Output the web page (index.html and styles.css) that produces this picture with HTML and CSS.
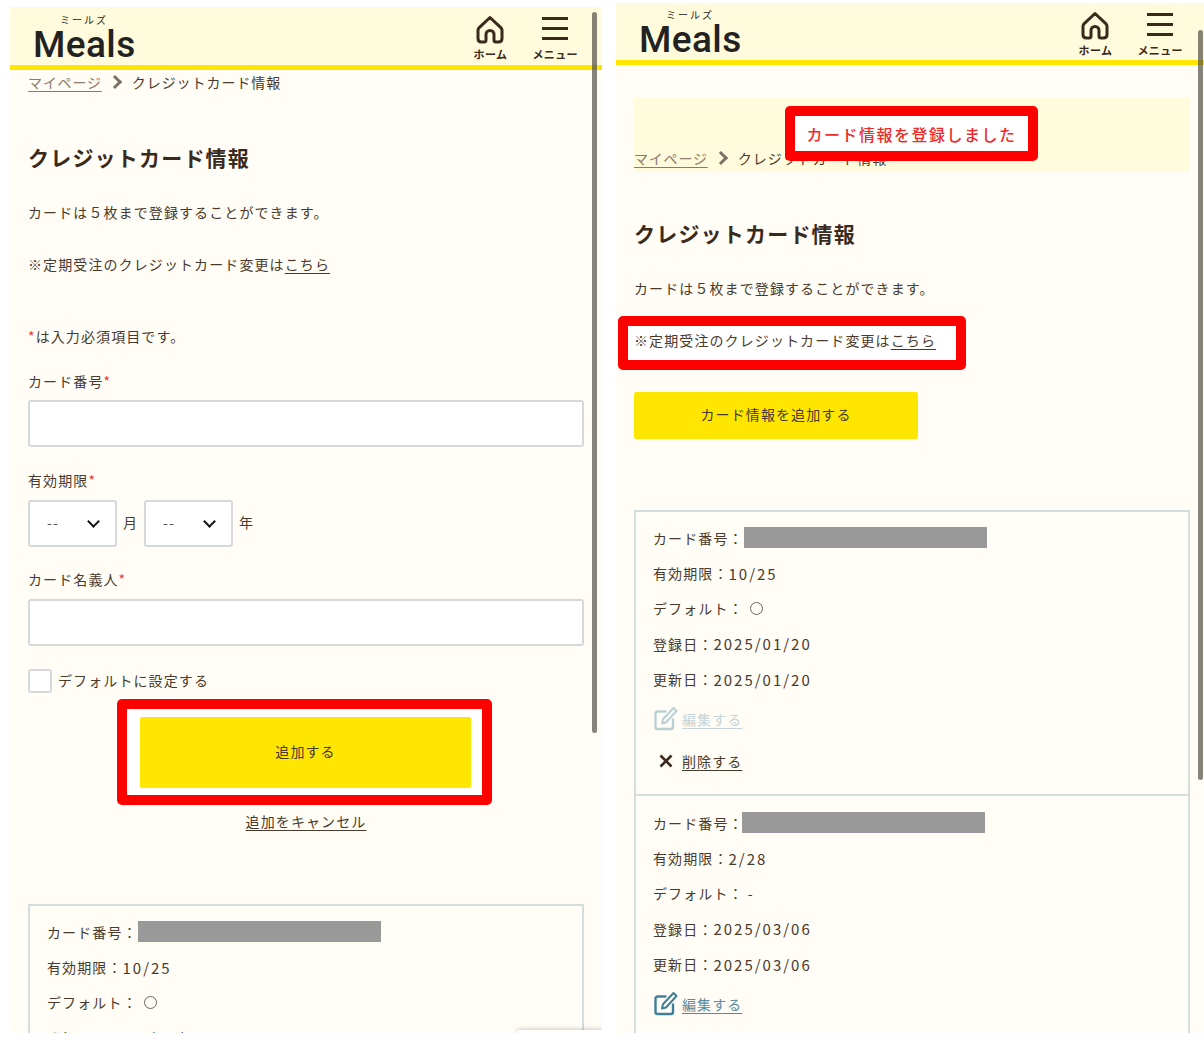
FILE: index.html
```html
<!DOCTYPE html>
<html lang="ja">
<head>
  <meta charset="UTF-8" />
  <title>クレジットカード情報 | Meals</title>
  <link rel="stylesheet" href="styles.css">
</head>
<body>
  <svg width="0" height="0" class="defs">
    <symbol id="i-home" viewBox="0 0 30 30">
      <path d="M15 2.500 4.200 12.600c-.8.8-1.200 1.600-1.200 2.700v8.200c0 2.200 1.300 3.500 3.500 3.500H9c1.300 0 2-.7 2-2v-5.500c0-2.200 1.700-4 4-4s4 1.800 4 4V25c0 1.300.7 2 2 2h2.500c2.200 0 3.500-1.300 3.500-3.500v-8.200c0-1.100-.4-1.900-1.200-2.700z" fill="none" stroke="currentColor" stroke-width="3" stroke-linejoin="round"/>
    </symbol>
    <symbol id="i-edit" viewBox="0 0 24 24">
      <path d="M12 4.500H4a2 2 0 0 0-2 2V20a2 2 0 0 0 2 2h13.500a2 2 0 0 0 2-2v-7.500" fill="none" stroke="currentColor" stroke-width="2.400" stroke-linecap="round"/>
      <path d="M20 1 23 4 12.500 15.500 8.500 16.500 9.500 12.200z" fill="none" stroke="currentColor" stroke-width="2" stroke-linejoin="round"/>
    </symbol>
    <symbol id="i-cross" viewBox="0 0 14 14">
      <path d="M1.500 1.500 12.500 12.500M12.500 1.500 1.500 12.500" fill="none" stroke="currentColor" stroke-width="2.600"/>
    </symbol>
  </svg>

  <!-- left phone: add card form -->
  <section class="phone phone-left">
    <header class="top">
      <div class="logo"><span class="logo-kana">ミールズ</span><span class="logo-name">Meals</span></div>
      <nav class="top-nav">
        <a class="top-link"><svg class="i-home"><use href="#i-home"/></svg><span>ホーム</span></a>
        <a class="top-link"><span class="burger"><i></i><i></i><i></i></span><span>メニュー</span></a>
      </nav>
    </header>
    <div class="crumbs"><a class="crumb-link">マイページ</a><span class="crumb-sep"></span><span>クレジットカード情報</span></div>
    <h1 class="title">クレジットカード情報</h1>
    <p class="line line-a">カードは５枚まで登録することができます。</p>
    <p class="line line-b">※定期受注のクレジットカード変更は<a class="link">こちら</a></p>

    <form class="card-form">
      <p class="line req-note"><em>*</em>は入力必須項目です。</p>
      <label class="field-label">カード番号<em>*</em></label>
      <div class="input"></div>
      <label class="field-label">有効期限<em>*</em></label>
      <div class="expiry">
        <div class="select">--<span class="chev"></span></div><span class="unit">月</span>
        <div class="select">--<span class="chev"></span></div><span class="unit">年</span>
      </div>
      <label class="field-label">カード名義人<em>*</em></label>
      <div class="input"></div>
      <div class="check-row"><span class="check"></span><span class="check-text">デフォルトに設定する</span></div>
      <div class="red-frame frame-submit"><button class="btn btn-add" type="button">追加する</button></div>
      <a class="link cancel">追加をキャンセル</a>
    </form>

    <div class="cards cards-left">
      <div class="card">
        <p class="card-row">カード番号：<span class="mask"></span></p>
        <p class="card-row">有効期限：<span class="num">10/25</span></p>
        <p class="card-row">デフォルト： <span class="circle"></span></p>
        <p class="card-row">登録日：<span class="num">2025/01/20</span></p>
      </div>
    </div>
    <div class="scrollbar scroll-left"></div>
    <div class="captcha"></div>
  </section>

  <!-- right phone: after registering -->
  <section class="phone phone-right">
    <header class="top">
      <div class="logo"><span class="logo-kana">ミールズ</span><span class="logo-name">Meals</span></div>
      <nav class="top-nav">
        <a class="top-link"><svg class="i-home"><use href="#i-home"/></svg><span>ホーム</span></a>
        <a class="top-link"><span class="burger"><i></i><i></i><i></i></span><span>メニュー</span></a>
      </nav>
    </header>
    <div class="flash">
      <div class="crumbs"><a class="crumb-link">マイページ</a><span class="crumb-sep"></span><span>クレジットカード情報</span></div>
      <div class="red-frame flash-msg">カード情報を登録しました</div>
    </div>
    <h1 class="title">クレジットカード情報</h1>
    <p class="line line-a">カードは５枚まで登録することができます。</p>
    <div class="red-frame frame-note"><p class="line">※定期受注のクレジットカード変更は<a class="link">こちら</a></p></div>
    <button class="btn btn-new" type="button">カード情報を追加する</button>

    <div class="cards cards-right">
      <div class="card">
        <p class="card-row">カード番号：<span class="mask"></span></p>
        <p class="card-row">有効期限：<span class="num">10/25</span></p>
        <p class="card-row">デフォルト： <span class="circle"></span></p>
        <p class="card-row">登録日：<span class="num">2025/01/20</span></p>
        <p class="card-row">更新日：<span class="num">2025/01/20</span></p>
        <a class="action action-edit is-off"><svg class="i-edit"><use href="#i-edit"/></svg><span>編集する</span></a>
        <a class="action action-del"><svg class="i-cross"><use href="#i-cross"/></svg><span>削除する</span></a>
      </div>
      <div class="card card-last">
        <p class="card-row">カード番号：<span class="mask mask-b"></span></p>
        <p class="card-row">有効期限：<span class="num">2/28</span></p>
        <p class="card-row">デフォルト： -</p>
        <p class="card-row">登録日：<span class="num">2025/03/06</span></p>
        <p class="card-row">更新日：<span class="num">2025/03/06</span></p>
        <a class="action action-edit"><svg class="i-edit"><use href="#i-edit"/></svg><span>編集する</span></a>
      </div>
    </div>
    <div class="scrollbar scroll-right"></div>
  </section>
</body>
</html>
```

FILE: styles.css
```css
/* ===== tokens ===== */
:root{
  --ink:#4a3a2d;
  --dark:#3a2a1d;
  --cream:#fffdf6;
  --butter:#fffbdc;
  --yellow:#ffe600;
  --red:#ff0000;
  --line:#d5dcdc;
}

/* ===== page ===== */
*{box-sizing:border-box;}
html,body{margin:0;height:100%;}
body{
  width:1204px;height:1044px;overflow:hidden;background:#fff;
  display:flex;align-items:flex-start;
  color:var(--ink);
  font-family:"Noto Sans CJK JP","Noto Sans",sans-serif;
  font-size:14px;letter-spacing:1.100px;
}
.defs{position:absolute;}
p{margin:0;}
.phone{position:relative;overflow:hidden;background:var(--cream);flex:none;}
.phone-left{width:592px;height:1026px;margin:7px 0 0 10px;padding:0 18px;}
.phone-right{width:588px;height:1030px;margin:3px 0 0 14px;padding:0 14px 0 18px;}

/* ===== header ===== */
.top{
  height:63px;margin:0 -18px;padding:0 24px 0 23px;
  background:var(--butter);border-bottom:5px solid var(--yellow);
  display:flex;justify-content:space-between;
}
.phone-right .top{margin-right:-14px;height:62px;padding-right:21px;}
.logo{display:flex;flex-direction:column;color:#222;}
.logo-kana{font-size:10px;line-height:12px;margin:7px 0 0 27px;letter-spacing:2px;}
.logo-name{
  font-family:Roboto,sans-serif;font-weight:500;
  font-size:37px;line-height:30px;letter-spacing:.4px;margin-top:4px;
}
.phone-right .logo-kana{margin-top:6px;}
.top-nav{display:flex;gap:25px;padding-top:6px;color:var(--dark);}
.top-link{
  display:flex;flex-direction:column;align-items:center;justify-content:flex-end;
  height:47px;font-size:11px;line-height:12px;font-weight:700;letter-spacing:.4px;
}
.i-home{width:30px;height:30px;margin-bottom:3px;}
.burger{display:flex;flex-direction:column;gap:7px;margin-bottom:8px;}
.burger i{display:block;width:26px;height:3px;background:var(--dark);}

/* ===== breadcrumbs ===== */
.crumbs{display:flex;align-items:center;height:26px;margin-top:-1px;letter-spacing:.95px;}
.crumb-link{color:#8d7a6c;text-decoration:underline;text-underline-offset:3px;letter-spacing:.8px;}
.crumb-sep{
  width:10px;height:10px;margin:0 12px 0 8px;
  border:solid #7d6f63;border-width:3px 3px 0 0;transform:rotate(45deg);
}

/* ===== text ===== */
.title{margin:47px 0 0;font-size:21px;line-height:30px;font-weight:700;color:var(--dark);letter-spacing:1.200px;}
.phone-right .title{margin-top:46px;}
.line{line-height:20px;}
.line-a{margin-top:30px;}
.line-b{margin-top:32px;}
.link{color:var(--ink);text-decoration:underline;text-underline-offset:3px;}
.num{font-size:15px;letter-spacing:2px;}

/* ===== form ===== */
.card-form{display:flex;flex-direction:column;}
.req-note{margin-top:52px;}
em{font-style:normal;color:#ee3333;}
.field-label{display:block;line-height:20px;margin-bottom:9px;}
.req-note + .field-label{margin-top:25px;}
.req-note ~ .input + .field-label{margin-bottom:10px;}
.input{height:47px;background:#fff;border:2px solid #d6d8da;border-radius:3px;margin-bottom:23px;}
.expiry{display:flex;align-items:center;gap:6px;margin-bottom:22px;}
.expiry + .field-label{margin-bottom:10px;}
.select{
  width:89px;height:47px;padding:0 17px 3px;background:#fff;
  border:2px solid #d6d8da;border-radius:3px;
  display:flex;align-items:center;justify-content:space-between;color:#555;
}
.unit{margin-top:-3px;}
.chev{
  width:9px;height:9px;margin:-1px 0 0;
  border:solid #111;border-width:0 2px 2px 0;transform:rotate(45deg);
}
.check-row{display:flex;align-items:center;gap:6px;height:24px;}
.check{width:24px;height:24px;background:#fff;border:2px solid #d6d8da;border-radius:3px;}
.check-text{margin-top:-2px;}
.btn{
  display:block;border:0;border-radius:2px;background:var(--yellow);color:var(--ink);
  font:inherit;letter-spacing:inherit;padding:0;
}
.red-frame{border:10px solid var(--red);border-radius:5px;background:#fff;}
.frame-submit{width:375px;height:106px;margin:6px 0 0 89px;padding:8px 13px;}
.btn-add{width:331px;height:71px;padding-bottom:3px;}
.cancel{align-self:center;line-height:20px;margin-top:6px;}

/* ===== registered cards ===== */
.cards{border:2px solid var(--line);}
.cards-left{margin-top:73px;}
.cards-right{margin-top:71px;}
.card{padding:8px 17px 0;}
.card + .card{border-top:2px solid var(--line);padding-top:9px;}
.card-last{padding-bottom:40px;}
.card-row{display:flex;align-items:center;height:35.400px;white-space:pre;}
.mask{display:inline-block;width:243px;height:21px;background:#999;}
.mask-b{margin-left:-2px;}
.circle{width:13px;height:13px;border:1.500px solid #666;border-radius:50%;margin-left:2px;}
.action{display:flex;align-items:center;gap:4px;height:42px;color:#5c8a9c;}
.action span{text-decoration:underline;text-underline-offset:3px;}
.action-edit{margin-top:1px;}
.i-edit{width:25px;height:24px;color:#3f7f97;}
.is-off{opacity:.35;}
.action-del{color:var(--ink);height:42px;margin-bottom:12px;}
.i-cross{width:14px;height:14px;margin:0 5px 0 6px;color:var(--dark);}

/* ===== right flash ===== */
.flash{
  position:relative;height:74px;margin-top:33px;background:var(--butter);
  display:flex;align-items:flex-end;
}
.flash .crumbs{margin-top:0;margin-bottom:1px;}
.flash-msg{
  position:absolute;left:151px;top:8px;width:253px;height:55px;
  display:flex;align-items:center;justify-content:center;
  color:#ee2a2a;font-size:16px;font-weight:500;letter-spacing:1.500px;
}
.frame-note{width:348px;height:54px;margin:18px 0 0 -16px;padding:4px 0 0 6px;}
.btn-new{width:284px;height:47px;margin-top:22px;padding-bottom:4px;}

/* ===== overlays ===== */
.scrollbar{position:absolute;width:5px;border-radius:3px;background:rgba(80,80,70,.7);}
.scroll-left{left:582px;top:5px;height:721px;}
.scroll-right{left:582px;top:27px;height:750px;}
.captcha{
  position:absolute;right:0;bottom:0;width:84px;height:3px;
  background:#fff;box-shadow:0 0 5px rgba(0,0,0,.35);
}
```
